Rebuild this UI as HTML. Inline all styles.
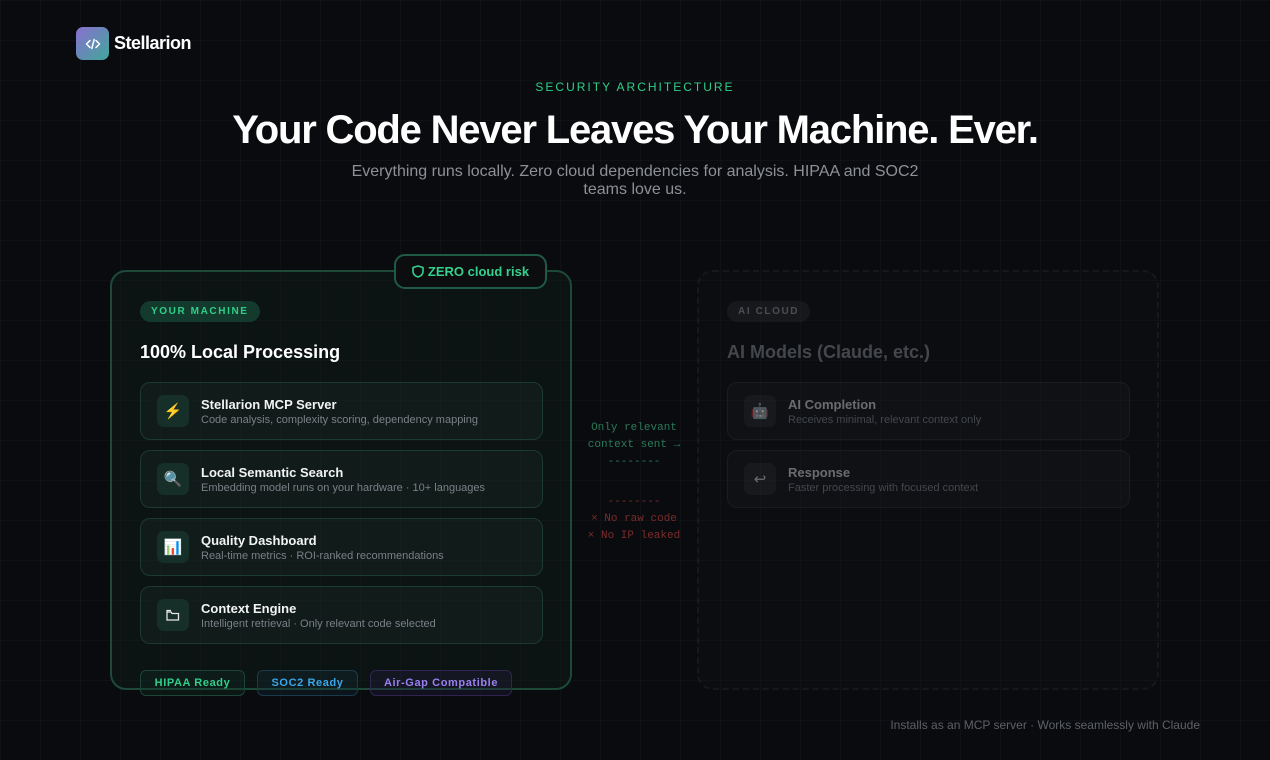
<!DOCTYPE html>
<html><head><meta charset="utf-8"><style>
*{box-sizing:border-box;margin:0;padding:0}
body{width:1270px;height:760px;overflow:hidden;background:#0a0b0e;font-family:"Liberation Sans","Noto Sans CJK SC",sans-serif;position:relative;
background-image:linear-gradient(rgba(255,255,255,0.025) 1px,transparent 1px),linear-gradient(90deg,rgba(255,255,255,0.025) 1px,transparent 1px);background-size:40px 40px}
.logo{position:absolute;left:76px;top:27px;display:flex;align-items:center}
.lb{width:33px;height:33px;border-radius:7px;background:linear-gradient(135deg,#8a6fd0,#3fa79a);display:flex;align-items:center;justify-content:center}
.lt{color:#fff;font-weight:bold;font-size:18px;margin-left:5px;letter-spacing:-0.5px}
.eyebrow{position:absolute;top:80px;width:100%;text-align:center;color:#2fcf8a;font-size:12px;letter-spacing:2px}
h1{position:absolute;top:108px;width:100%;text-align:center;color:#fff;font-size:40px;font-weight:bold;letter-spacing:-1.2px}
.sub{position:absolute;top:163px;left:335px;width:600px;text-align:center;color:#8d9097;font-size:16px;line-height:18px}
.card{position:absolute;top:270px;width:462px;height:420px;border-radius:16px}
.left{left:110px;border:2px solid #1d4a38;background:rgba(20,40,34,0.3)}
.right{left:697px;border:2px dashed #22262b;opacity:.5;background:rgba(20,22,26,.4)}
.pill{position:absolute;left:28px;top:29px;height:21px;padding:0 11px;border-radius:11px;font-size:10px;font-weight:bold;letter-spacing:1.6px;line-height:21px}
.title{position:absolute;left:28px;top:70px;font-size:18px;font-weight:bold}
.item{position:absolute;left:28px;width:403px;height:58px;border-radius:10px;border:1px solid #1c3a31;background:rgba(30,45,42,.3)}
.ic{position:absolute;left:16px;top:12px;width:32px;height:32px;border-radius:7px;background:#163029;display:flex;align-items:center;justify-content:center;font-size:15px}
.it{position:absolute;left:60px;top:14px;color:#f1f3f5;font-weight:bold;font-size:13px}
.id{position:absolute;left:60px;top:31px;color:#7b8087;font-size:11px}
.zero{position:absolute;left:394px;top:254px;width:153px;height:35px;border:2px solid #1f5a44;border-radius:11px;background:#0b0d0f;color:#36d08e;font-weight:bold;font-size:13px;display:flex;align-items:center;justify-content:center;gap:4px}
.badge{position:absolute;top:670px;height:26px;border-radius:6px;font-size:11px;font-weight:bold;letter-spacing:.6px;line-height:25px;text-align:center}
.mid{position:absolute;left:574px;width:120px;text-align:center;font-family:"Liberation Mono",monospace;font-size:11px;line-height:17px}
.foot{position:absolute;right:70px;top:718px;color:#5d6168;font-size:12px}
</style></head><body>
<div class="logo"><div class="lb"><svg width="16" height="12" viewBox="0 0 16 12" fill="none" stroke="#fff" stroke-width="1.5" stroke-linecap="round" stroke-linejoin="round"><path d="M5 2.5L1.5 6L5 9.5M11 2.5L14.5 6L11 9.5M9.2 1.5L6.8 10.5"/></svg></div><div class="lt">Stellarion</div></div>
<div class="eyebrow">SECURITY ARCHITECTURE</div>
<h1>Your Code Never Leaves Your Machine. Ever.</h1>
<div class="sub">Everything runs locally. Zero cloud dependencies for analysis. HIPAA and SOC2 teams love us.</div>

<div class="card left">
<div class="pill" style="background:#133a2c;color:#2fcf8a">YOUR MACHINE</div>
<div class="title" style="color:#fff">100% Local Processing</div>
<div class="item" style="top:110px"><div class="ic">⚡</div><div class="it">Stellarion MCP Server</div><div class="id">Code analysis, complexity scoring, dependency mapping</div></div>
<div class="item" style="top:178px"><div class="ic">🔍</div><div class="it">Local Semantic Search</div><div class="id">Embedding model runs on your hardware · 10+ languages</div></div>
<div class="item" style="top:246px"><div class="ic">📊</div><div class="it">Quality Dashboard</div><div class="id">Real-time metrics · ROI-ranked recommendations</div></div>
<div class="item" style="top:314px"><div class="ic"><svg width="14" height="12" viewBox="0 0 14 12" fill="none" stroke="#e6e6e6" stroke-width="1.3"><path d="M1 3h4l1 1.5h6.5V11H1z M1 3V1.5h4"/></svg></div><div class="it">Context Engine</div><div class="id">Intelligent retrieval · Only relevant code selected</div></div>
</div>
<div class="zero"><svg width="12" height="13" viewBox="0 0 12 13" fill="none" stroke="#36d08e" stroke-width="1.6" stroke-linejoin="round"><path d="M6 1L11 2.5V6.5C11 9.5 8.5 11.2 6 12C3.5 11.2 1 9.5 1 6.5V2.5Z"/></svg>ZERO cloud risk</div>
<div class="badge" style="left:140px;width:105px;border:1px solid #1b4536;background:rgba(20,50,40,.3);color:#2fcf8a">HIPAA Ready</div>
<div class="badge" style="left:257px;width:101px;border:1px solid #1b3a4c;background:rgba(20,45,60,.3);color:#3aa6e8">SOC2 Ready</div>
<div class="badge" style="left:370px;width:142px;border:1px solid #2f2550;background:rgba(40,30,70,.3);color:#9b80f0">Air-Gap Compatible</div>

<div class="mid" style="top:420px;color:#2a7a58">Only relevant<br>context sent →<br>--------</div>
<div class="mid" style="top:494px;color:#7a2c2c">--------<br>× No raw code<br>× No IP leaked</div>

<div class="card right">
<div class="pill" style="background:#23262b;color:#8a8e94">AI CLOUD</div>
<div class="title" style="color:#7d8187">AI Models (Claude, etc.)</div>
<div class="item" style="top:110px;border-color:#2a2e34;background:rgba(35,38,44,.4)"><div class="ic" style="background:#25282d">🤖</div><div class="it" style="color:#c8cbd0">AI Completion</div><div class="id">Receives minimal, relevant context only</div></div>
<div class="item" style="top:178px;border-color:#2a2e34;background:rgba(35,38,44,.4)"><div class="ic" style="background:#25282d;color:#ccc">↩</div><div class="it" style="color:#c8cbd0">Response</div><div class="id">Faster processing with focused context</div></div>
</div>
<div class="foot">Installs as an MCP server · Works seamlessly with Claude</div>
</body></html>
